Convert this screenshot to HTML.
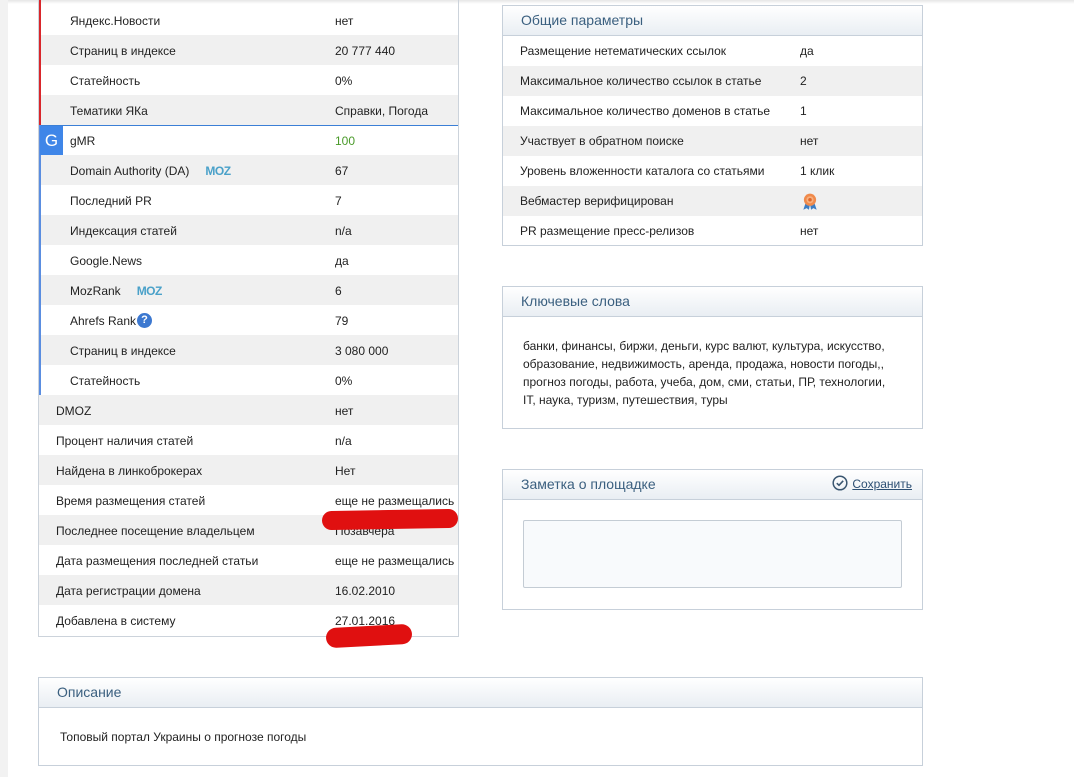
<!DOCTYPE html>
<html><head><meta charset="utf-8"><style>
*{margin:0;padding:0;box-sizing:border-box}
body{width:1074px;height:777px;background:#fff;font-family:"Liberation Sans",Arial,sans-serif;font-size:12px;color:#222;position:relative;overflow:hidden}
.strip{position:absolute;left:0;top:0;width:8px;height:777px;background:#f2f2f2}
.topsh{position:absolute;left:8px;top:0;width:1066px;height:4px;background:linear-gradient(#e6e6e6,#fff)}
.lp{position:absolute;left:38px;top:0;width:421px;height:637px;border:1px solid #ccd3db;border-top:none}
.row{position:absolute;left:0;width:419px;height:30px;line-height:32px}
.row.g{background:#f0f0f0}
.row .l{position:absolute;left:31px}
.row .v{position:absolute;left:296px;white-space:nowrap}
.row.o .l{left:17px}
.panel{position:absolute;border:1px solid #c7d0da;background:#fff}
.ph{height:30px;line-height:29px;padding-left:18px;font-size:14px;color:#3a5f7f;background:linear-gradient(#fff,#e9eef3);border-bottom:1px solid #c7d0da}
.pr{height:30px;line-height:30px;position:relative}
.pr.g{background:#f0f0f0}
.pr .l{position:absolute;left:17px;font-size:12px}
.pr .v{position:absolute;left:297px;font-size:12px}
.moz{font-weight:bold;font-size:12px;color:#4aa1c9;letter-spacing:-0.5px;margin-left:16px}
.scrib{position:absolute;background:#e01010;border-radius:12px}
.ln{position:absolute;left:0;width:2px;z-index:5}
</style></head><body>
<div class="strip"></div><div class="topsh"></div>
<div class="lp">
<div class="ln" style="top:0;height:125px;background:#d9262b"></div>
<div style="position:absolute;left:0;top:125px;width:419px;height:1px;background:#3b7fd6;z-index:5"></div>
<div class="ln" style="top:125px;height:270px;background:#5a8de0"></div>
<div style="position:absolute;left:1px;top:126px;width:23px;height:29px;background:#3f86e8;color:#fff;font-size:17px;line-height:29px;text-align:center;z-index:6">G</div>
<div class="row" style="top:5px"><span class="l">Яндекс.Новости</span><span class="v">нет</span></div>
<div class="row g" style="top:35px"><span class="l">Страниц в индексе</span><span class="v">20 777 440</span></div>
<div class="row" style="top:65px"><span class="l">Статейность</span><span class="v">0%</span></div>
<div class="row g" style="top:95px"><span class="l">Тематики ЯКа</span><span class="v">Справки, Погода</span></div>
<div class="row" style="top:126px;height:29px;line-height:31px"><span class="l">gMR</span><span class="v" style="color:#4a9a2a">100</span></div>
<div class="row g" style="top:155px"><span class="l">Domain Authority (DA)<span class="moz">MOZ</span></span><span class="v">67</span></div>
<div class="row" style="top:185px"><span class="l">Последний PR</span><span class="v">7</span></div>
<div class="row g" style="top:215px"><span class="l">Индексация статей</span><span class="v">n/a</span></div>
<div class="row" style="top:245px"><span class="l">Google.News</span><span class="v">да</span></div>
<div class="row g" style="top:275px"><span class="l">MozRank<span class="moz">MOZ</span></span><span class="v">6</span></div>
<div class="row" style="top:305px"><span class="l">Ahrefs Rank<span style="display:inline-block;width:15px;height:15px;border-radius:50%;background:#3c78d0;color:#fff;font-size:11px;line-height:15px;text-align:center;font-weight:bold;vertical-align:2px;margin-left:1px">?</span></span><span class="v">79</span></div>
<div class="row g" style="top:335px"><span class="l">Страниц в индексе</span><span class="v">3 080 000</span></div>
<div class="row" style="top:365px"><span class="l">Статейность</span><span class="v">0%</span></div>
<div class="row g o" style="top:395px"><span class="l">DMOZ</span><span class="v">нет</span></div>
<div class="row o" style="top:425px"><span class="l">Процент наличия статей</span><span class="v">n/a</span></div>
<div class="row g o" style="top:455px"><span class="l">Найдена в линкоброкерах</span><span class="v">Нет</span></div>
<div class="row o" style="top:485px"><span class="l">Время размещения статей</span><span class="v">еще не размещались</span></div>
<div class="row g o" style="top:515px"><span class="l">Последнее посещение владельцем</span><span class="v">Позавчера</span></div>
<div class="row o" style="top:545px"><span class="l">Дата размещения последней статьи</span><span class="v">еще не размещались</span></div>
<div class="row g o" style="top:575px"><span class="l">Дата регистрации домена</span><span class="v">16.02.2010</span></div>
<div class="row o" style="top:605px"><span class="l">Добавлена в систему</span><span class="v">27.01.2016</span></div>
</div>
<div class="scrib" style="left:322px;top:510px;width:136px;height:19px;transform:rotate(-1deg)"></div>
<div class="scrib" style="left:326px;top:626px;width:86px;height:20px;transform:rotate(-3deg)"></div>

<div class="panel" style="left:502px;top:5px;width:421px;height:241px">
<div class="ph">Общие параметры</div>
<div class="pr"><span class="l">Размещение нетематических ссылок</span><span class="v">да</span></div>
<div class="pr g"><span class="l">Максимальное количество ссылок в статье</span><span class="v">2</span></div>
<div class="pr"><span class="l">Максимальное количество доменов в статье</span><span class="v">1</span></div>
<div class="pr g"><span class="l">Участвует в обратном поиске</span><span class="v">нет</span></div>
<div class="pr"><span class="l">Уровень вложенности каталога со статьями</span><span class="v">1 клик</span></div>
<div class="pr g"><span class="l">Вебмастер верифицирован</span><span class="v"><svg width="20" height="20" viewBox="0 0 18 18" style="vertical-align:middle"><path d="M5 10 L3 16 L6 14.5 L8 16 L9 11Z M13 10 L15 16 L12 14.5 L10 16 L9 11Z" fill="#3c7dc4"/><circle cx="9" cy="7" r="5.5" fill="#f08a4b"/><circle cx="9" cy="7" r="3.2" fill="#f7b07f"/><circle cx="9" cy="7" r="1.6" fill="#e0672a"/></svg></span></div>
<div class="pr"><span class="l">PR размещение пресс-релизов</span><span class="v">нет</span></div>
</div>

<div class="panel" style="left:502px;top:286px;width:421px;height:143px">
<div class="ph">Ключевые слова</div>
<div style="padding:20px 0 0 20px;font-size:12px;line-height:18px;width:392px">банки, финансы, биржи, деньги, курс валют, культура, искусство, образование, недвижимость, аренда, продажа, новости погоды,, прогноз погоды, работа, учеба, дом, сми, статьи, ПР, технологии, IT, наука, туризм, путешествия, туры</div>
</div>

<div class="panel" style="left:502px;top:469px;width:421px;height:141px">
<div class="ph" style="position:relative">Заметка о площадке<span style="position:absolute;right:10px;top:0;font-size:12px;color:#2c4f73;text-decoration:underline"><svg width="16" height="16" viewBox="0 0 16 16" style="vertical-align:-3px;margin-right:4px"><circle cx="8" cy="8" r="6.8" fill="none" stroke="#3a5670" stroke-width="1.5"/><path d="M4.8 8.2 L7 10.3 L11.2 5.8" fill="none" stroke="#3a5670" stroke-width="1.6"/></svg>Сохранить</span></div>
<div style="position:absolute;left:20px;top:50px;width:379px;height:68px;border:1px solid #c4ccd4;border-radius:2px;background:#f8fafc"></div>
</div>

<div class="panel" style="left:38px;top:677px;width:885px;height:89px">
<div class="ph">Описание</div>
<div style="padding:22px 0 0 21px;font-size:12px">Топовый портал Украины о прогнозе погоды</div>
</div>
</body></html>
